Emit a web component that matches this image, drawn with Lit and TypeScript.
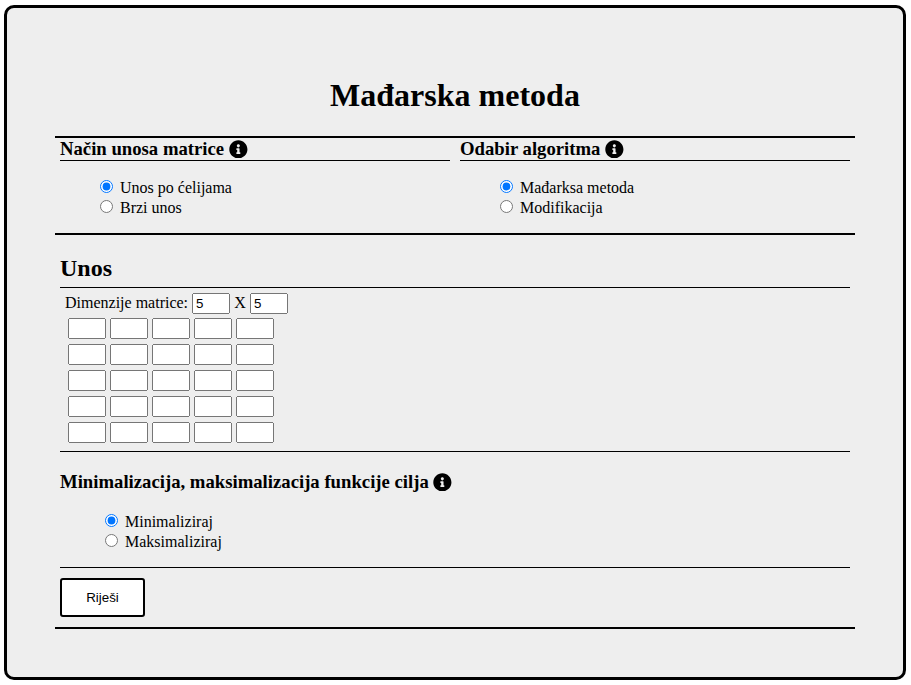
import { LitElement, html, css } from "lit";
import { customElement, property, state } from "lit/decorators.js";

@customElement("info-icon")
class InfoIcon extends LitElement {
  static styles = css`
    :host { display: block; width: 18.72px; height: 18.72px; flex: none; }
    svg { display: block; width: 100%; height: 100%; }
  `;
  render() {
    return html`<svg viewBox="0 0 512 512" fill="currentColor" aria-hidden="true">
      <path d="M256 8C119.043 8 8 119.083 8 256c0 136.997 111.043 248 248 248s248-111.003 248-248C504 119.083 392.957 8 256 8zm0 110c23.196 0 42 18.804 42 42s-18.804 42-42 42-42-18.804-42-42 18.804-42 42-42zm56 254c0 6.627-5.373 12-12 12h-88c-6.627 0-12-5.373-12-12v-24c0-6.627 5.373-12 12-12h12v-64h-12c-6.627 0-12-5.373-12-12v-24c0-6.627 5.373-12 12-12h64c6.627 0 12 5.373 12 12v100h12c6.627 0 12 5.373 12 12v24z"/>
    </svg>`;
  }
}

@customElement("radio-list")
class RadioList extends LitElement {
  @property({ attribute: false }) options: string[] = [];
  @state() selected = 0;

  static styles = css`
    :host { display: block; }
    .option { display: flex; height: 20px; line-height: 20px; }
    .radio { width: 13px; height: 13px; margin: 2px 7px 0 0; flex: none; }
  `;
  render() {
    return this.options.map(
      (label, i) => html`<label class="option">
        <input class="radio" type="radio" name="choice" .checked=${i === this.selected}
          @change=${() => (this.selected = i)} /><span>${label}</span>
      </label>`
    );
  }
}

@customElement("app-root")
class AppRoot extends LitElement {
  @state() rows = 5;
  @state() cols = 5;

  static styles = css`
    :host {
      display: block;
      height: 685px;
      box-sizing: border-box;
      padding: 5px 5px 5px 4px;
      background: #fff;
      color: #000;
      font: 16px "Liberation Serif", "Times New Roman", serif;
    }
    .frame {
      box-sizing: border-box;
      height: 675px;
      padding: 0 48px;
      border: 3px solid #000;
      border-radius: 10px;
      background: #eee;
    }
    h1, h2, h3 { margin: 0; font-weight: bold; white-space: nowrap; }
    h1 {
      padding-top: 69px;
      height: 59px;
      font-size: 32px;
      line-height: 37px;
      text-align: center;
    }
    h2 { font-size: 24px; line-height: 28px; height: 33px; padding-top: 19px; }
    h3 { display: flex; gap: 4.68px; align-items: center; font-size: 18.72px; line-height: 22px; height: 22px; }
    .choices {
      display: grid;
      grid-template-columns: 1fr 1fr;
      box-sizing: border-box;
      height: 99px;
      border-top: 2px solid #000;
      border-bottom: 2px solid #000;
    }
    .choice { padding: 0 5px; }
    .choice h3 { border-bottom: 1px solid #000; }
    .choice radio-list { padding: 17px 0 0 40px; }
    .entry { padding: 0 5px; height: 392px; border-bottom: 2px solid #000; }
    .matrix { height: 163px; box-sizing: content-box; border: solid #000; border-width: 1px 0; }
    .dims { display: flex; padding: 5px 0 0 5px; height: 21px; line-height: 20px; }
    .dims .text { width: 127px; }
    .dims .times { width: 20px; text-align: center; }
    .cell {
      box-sizing: border-box;
      width: 38px;
      height: 21px;
      margin: 0;
      font: 13.333px "Liberation Sans", Arial, sans-serif;
    }
    .grid { display: grid; gap: 5px 4px; padding: 4px 0 0 8px; justify-content: start; }
    .goal { height: 115px; border-bottom: 1px solid #000; }
    .goal h3 { padding-top: 19px; }
    .goal radio-list { padding: 19px 0 0 45px; }
    .solve {
      display: block;
      box-sizing: border-box;
      width: 85px;
      height: 39px;
      margin: 10px 0 0;
      padding: 0;
      border: 2px solid #000;
      border-radius: 3px;
      background: #fff;
      color: #000;
      font: 13.333px "Liberation Sans", Arial, sans-serif;
    }
  `;

  render() {
    return html`<main class="frame">
      <h1>Mađarska metoda</h1>
      <div class="choices">
        <section class="choice">
          <h3>Način unosa matrice<info-icon></info-icon></h3>
          <radio-list .options=${["Unos po ćelijama", "Brzi unos"]}></radio-list>
        </section>
        <section class="choice">
          <h3>Odabir algoritma<info-icon></info-icon></h3>
          <radio-list .options=${["Mađarksa metoda", "Modifikacija"]}></radio-list>
        </section>
      </div>
      <div class="entry">
        <h2>Unos</h2>
        <div class="matrix">
          <div class="dims">
            <span class="text">Dimenzije matrice:</span>
            <input class="cell" .value=${String(this.rows)} />
            <span class="times">X</span>
            <input class="cell" .value=${String(this.cols)} />
          </div>
          <div class="grid" style="grid-template-columns: repeat(${this.cols}, 38px)">
            ${Array.from({ length: this.rows * this.cols }, () => html`<input class="cell" />`)}
          </div>
        </div>
        <div class="goal">
          <h3>Minimalizacija, maksimalizacija funkcije cilja<info-icon></info-icon></h3>
          <radio-list .options=${["Minimaliziraj", "Maksimaliziraj"]}></radio-list>
        </div>
        <button class="solve">Riješi</button>
      </div>
    </main>`;
  }
}
